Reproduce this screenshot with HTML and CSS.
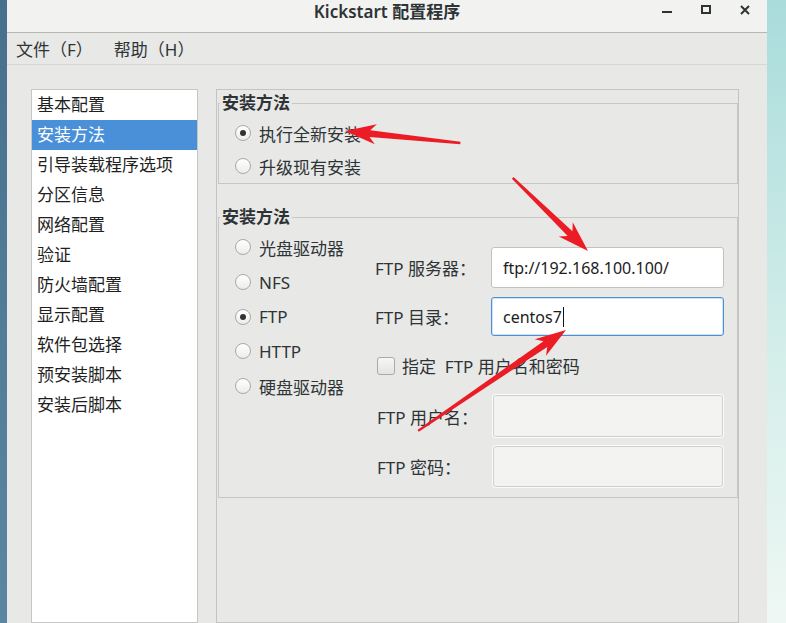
FILE: index.html
```html
<!DOCTYPE html>
<html>
<head>
    <meta charset="utf-8">
    <title>Kickstart 配置程序</title>
    <link rel="stylesheet" href="styles.css">
</head>
<body>
    <div class="desk-left"></div>

    <div class="window">
        <div class="titlebar">
            <div></div>
            <div class="title">Kickstart 配置程序</div>
            <div class="win-buttons">
                <span class="wbtn"><svg width="12" height="12" viewBox="0 0 12 12"><rect x="1" y="7" width="10" height="2" fill="#2e3436"/></svg></span>
                <span class="wbtn"><svg width="12" height="12" viewBox="0 0 12 12"><rect x="2" y="2" width="8" height="7" fill="none" stroke="#2e3436" stroke-width="2"/></svg></span>
                <span class="wbtn"><svg width="12" height="12" viewBox="0 0 12 12"><path d="M2 2 L10 10 M10 2 L2 10" stroke="#2e3436" stroke-width="2"/></svg></span>
            </div>
        </div>

        <div class="menubar">
            <span>文件（F）</span>
            <span>帮助（H）</span>
        </div>

        <div class="content">
            <ul class="sections">
                <li>基本配置</li>
                <li class="selected">安装方法</li>
                <li>引导装载程序选项</li>
                <li>分区信息</li>
                <li>网络配置</li>
                <li>验证</li>
                <li>防火墙配置</li>
                <li>显示配置</li>
                <li>软件包选择</li>
                <li>预安装脚本</li>
                <li>安装后脚本</li>
            </ul>

            <div class="panel">
                <fieldset class="group group-mode">
                    <legend>安装方法</legend>
                    <div class="radio-list">
                        <label class="radio checked"><span class="dot"></span>执行全新安装</label>
                        <label class="radio"><span class="dot"></span>升级现有安装</label>
                    </div>
                </fieldset>

                <fieldset class="group group-source">
                    <legend>安装方法</legend>
                    <div class="source-body">
                        <div class="radio-list sources">
                            <label class="radio"><span class="dot"></span>光盘驱动器</label>
                            <label class="radio"><span class="dot"></span>NFS</label>
                            <label class="radio checked"><span class="dot"></span>FTP</label>
                            <label class="radio"><span class="dot"></span>HTTP</label>
                            <label class="radio"><span class="dot"></span>硬盘驱动器</label>
                        </div>

                        <div class="ftp-form">
                            <span class="field-label">FTP 服务器：</span>
                            <div class="entry">ftp://192.168.100.100/</div>

                            <span class="field-label">FTP 目录：</span>
                            <div class="entry focused">centos7<span class="caret"></span></div>

                            <label class="check-row"><span class="checkbox"></span>指定&nbsp; FTP 用户名和密码</label>

                            <span class="field-label indent">FTP 用户名：</span>
                            <div class="entry disabled"></div>

                            <span class="field-label indent">FTP 密码：</span>
                            <div class="entry disabled"></div>
                        </div>
                    </div>
                </fieldset>
            </div>
        </div>
    </div>

    <div class="desk-right"></div>

    <!-- red annotation arrows drawn over the screenshot -->
    <svg class="annotations" width="786" height="623" viewBox="0 0 786 623">
        <g fill="#ec1c24">
            <polygon transform="translate(345,131) rotate(185.96)" points="-116,-1.2 -25,-3.4 -31,-10 0,0 -31,10 -25,3.4 -116,1.2"/>
            <polygon transform="translate(588,251) rotate(44.2)" points="-105,-1.2 -25,-3.4 -31,-10 0,0 -31,10 -25,3.4 -105,1.2"/>
            <polygon transform="translate(566,330) rotate(-34.3)" points="-179,-1.2 -25,-3.4 -31,-10 0,0 -31,10 -25,3.4 -179,1.2"/>
        </g>
    </svg>
</body>
</html>
```

FILE: styles.css
```css
body {
    margin: 0;
    width: 786px;
    height: 623px;
    overflow: hidden;
    display: flex;
    position: relative;
    font-family: "Noto Sans", "Noto Sans CJK SC", sans-serif;
    font-size: 17px;
    color: #2e3436;
}

.desk-left {
    width: 7px;
    background: linear-gradient(#47708f, #5a86a3);
}

.desk-right {
    flex: 1;
    background: linear-gradient(#a9dcdb, #d6efeb 60%, #eef7f3);
}

.window {
    width: 760px;
    height: 623px;
    background: #e8e8e7;
    display: flex;
    flex-direction: column;
    overflow: hidden;
}

/* title bar */
.titlebar {
    height: 32px;
    flex: none;
    background: #f2f2f1;
    border-bottom: 1px solid #b6b6b3;
    display: grid;
    grid-template-columns: 1fr auto 1fr;
    align-items: center;
}

.title {
    font-weight: 600;
    color: #2e3436;
    line-height: 24px;
    margin-top: -8px;
}

.win-buttons {
    display: flex;
    justify-content: flex-end;
    gap: 15px;
    padding-right: 10px;
    margin-top: -12px;
}

.wbtn {
    width: 24px;
    height: 16px;
    display: flex;
    align-items: center;
    justify-content: center;
}

/* menu bar */
.menubar {
    height: 31px;
    flex: none;
    border-bottom: 1px solid #d6d6d4;
    display: flex;
    align-items: center;
    gap: 21px;
    padding-left: 9px;
}

/* main area */
.content {
    flex: 1;
    display: flex;
    gap: 18px;
    padding: 24px 28px 0 24px;
}

.sections {
    list-style: none;
    margin: 0;
    padding: 0;
    width: 165px;
    background: #fff;
    border: 1px solid #c6c6c4;
    flex: none;
}

.sections li {
    height: 30px;
    line-height: 30px;
    padding-left: 5px;
    color: #1f1f1f;
}

.sections li.selected {
    background: #4a90d9;
    color: #fff;
}

.panel {
    flex: 1;
    border: 1px solid #c4c4c2;
}

/* group boxes */
.group {
    margin: 0 0 0 1px;
    padding: 0;
    border: 1px solid #c6c6c4;
    min-width: 0;
}

.group legend {
    padding: 0 2px;
    margin-left: 1px;
    line-height: 20px;
    font-weight: bold;
    color: #2e3436;
}

.group-mode {
    margin-top: 3px;
}

.group-mode .radio-list {
    padding: 5px 0 0 16px;
    gap: 3px;
}

.group-mode .radio:last-child {
    margin-bottom: 2px;
}

.group-source {
    margin-top: 23px;
    padding-bottom: 10px;
}

.radio-list {
    display: flex;
    flex-direction: column;
}

.radio {
    display: flex;
    align-items: center;
    gap: 8px;
    height: 30px;
}

.sources .radio {
    height: 34.7px;
}

.dot {
    width: 16px;
    height: 16px;
    box-sizing: border-box;
    border: 1px solid #a9a9a7;
    border-radius: 50%;
    background: linear-gradient(#ffffff, #ececeb);
    display: flex;
    align-items: center;
    justify-content: center;
}

.radio.checked .dot::after {
    content: "";
    width: 6px;
    height: 6px;
    border-radius: 50%;
    background: #2e3436;
}

.source-body {
    display: flex;
    padding: 3px 0 0 16px;
}

.sources {
    width: 140px;
    flex: none;
}

/* ftp fields */
.ftp-form {
    margin-top: 17px;
    display: grid;
    grid-template-columns: 116px 233px;
    grid-template-rows: 41px 39px 41px 42px 41px;
    row-gap: 9px;
    align-items: center;
}

.field-label {
    white-space: nowrap;
}

.field-label.indent {
    padding-left: 2px;
}

.entry {
    height: 100%;
    box-sizing: border-box;
    background: #fff;
    border: 1px solid #c2c2bf;
    border-radius: 3px;
    padding-left: 11px;
    display: flex;
    align-items: center;
    font-size: 16px;
    color: #1c1c1c;
}

.entry.focused {
    border-color: #4a90d9;
    box-shadow: inset 0 0 0 1px rgba(74, 144, 217, 0.25);
}

.entry.disabled {
    margin-left: 2px;
    width: 230px;
    background: #f3f3f1;
    border-color: #cfcfcc;
    box-shadow: 0 0 0 1px #fbfbfa;
}

.caret {
    width: 1px;
    height: 20px;
    background: #111;
    margin-left: 1px;
}

.check-row {
    grid-column: 1 / 3;
    display: flex;
    align-items: center;
    gap: 7px;
    padding-left: 2px;
}

.checkbox {
    width: 18px;
    height: 18px;
    box-sizing: border-box;
    border: 1px solid #a9a9a7;
    border-radius: 3px;
    background: linear-gradient(#f6f6f5, #e4e4e3);
}

.annotations {
    position: absolute;
    left: 0;
    top: 0;
    pointer-events: none;
}
```
